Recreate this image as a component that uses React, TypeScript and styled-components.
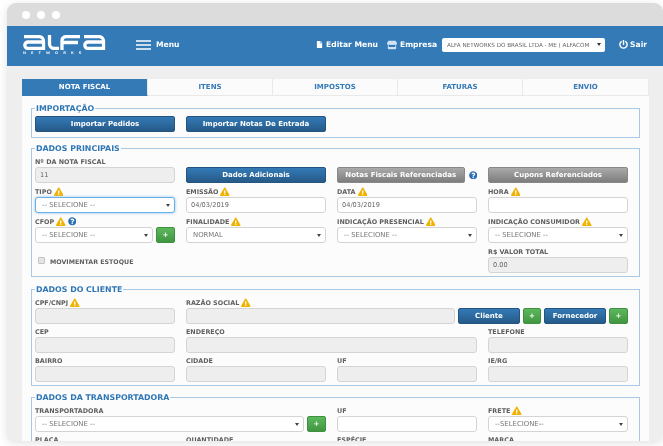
import React from 'react';
import styled, { createGlobalStyle } from 'styled-components';
import { FaExclamationTriangle, FaFile, FaPowerOff, FaQuestionCircle, FaStore } from 'react-icons/fa';

const GlobalStyle = createGlobalStyle`
  html, body {
    margin: 0;
    height: 100%;
    overflow: hidden;
    background: #fff;
    font-family: "DejaVu Sans", Verdana, sans-serif;
  }
`;

const Frame = styled.div`
  width: 656px;
  height: 438px;
  margin: 3px 0 0 7px;
  border-radius: 9px 9px 7px 7px;
  overflow: hidden;
  background: #eeeeee;
  box-shadow: 0 2px 10px rgba(0, 0, 0, 0.12);
  filter: blur(0.3px);
`;

const TitleBar = styled.div`
  height: 23px;
  background: #dcdcdc;
  display: flex;
  align-items: center;
  gap: 7px;
  padding-left: 15px;
`;

const Dot = styled.span`
  width: 8px;
  height: 8px;
  border-radius: 50%;
  background: #fff;
`;

const Header = styled.header`
  height: 40px;
  box-sizing: border-box;
  background: #337ab7;
  display: flex;
  align-items: center;
  color: #fff;
  font-size: 7.6px;
  font-weight: bold;
  padding: 0 0 3px 15px;
`;

const Logo = styled.div`
  width: 84px;
  display: flex;
  flex-direction: column;
  align-items: flex-start;
  gap: 1px;
  margin: 1px 30px 0 0;
`;

const LogoSub = styled.span`
  font-size: 3.6px;
  letter-spacing: 5.05px;
  line-height: 5px;
  margin-left: 1px;
  opacity: 0.9;
`;

const HeaderItem = styled.span<{ $left?: number }>`
  display: inline-flex;
  align-items: center;
  gap: 3px;
  margin-left: ${({ $left }) => $left ?? 0}px;
  white-space: nowrap;
`;

const MenuItem = styled(HeaderItem)`
  gap: 5px;
`;

const LogoutItem = styled(HeaderItem)`
  gap: 2px;
  margin-right: 16px;
`;

const Spacer = styled.div`
  flex: 1;
`;

const CompanySelect = styled.div`
  width: 163px;
  height: 14px;
  margin: 0 14px 0 5px;
  box-sizing: border-box;
  background: #fff;
  border-radius: 2px;
  color: #666;
  font-size: 5.65px;
  font-weight: normal;
  display: flex;
  align-items: center;
  justify-content: space-between;
  padding: 0 4px 0 5px;
  white-space: nowrap;
  overflow: hidden;
`;

const Caret = styled.i`
  flex: none;
  width: 0;
  height: 0;
  border: 2px solid transparent;
  border-top: 3px solid #333;
  border-bottom: 0;
`;

const Content = styled.div`
  padding: 13px 14px 0 15px;
`;

const Tabs = styled.nav`
  display: grid;
  grid-template-columns: 126px 125px 125px 125px 126px;
  height: 17px;
`;

const Tab = styled.div<{ $active?: boolean }>`
  background: ${({ $active }) => ($active ? '#337ab7' : '#fbfbfb')};
  color: ${({ $active }) => ($active ? '#fff' : '#337ab7')};
  border-right: 1px solid #e9e9e9;
  border-bottom: 1px solid ${({ $active }) => ($active ? '#337ab7' : '#e9e9e9')};
  box-sizing: border-box;
  font-size: 7px;
  font-weight: bold;
  display: flex;
  align-items: center;
  justify-content: center;
`;

const Panel = styled.main`
  background: #fcfcfc;
  padding: 6px 9px 0;
  height: 400px;
`;

const Group = styled.fieldset<{ $after: number }>`
  margin: 0 0 ${({ $after }) => $after}px;
  padding: 1px 11px 3px 3px;
  border: 1px solid #a9c8e4;
  min-width: 0;
`;

const GroupTitle = styled.legend`
  margin-left: 0;
  padding: 0 1px;
  height: 13px;
  line-height: 13px;
  color: #2f76b5;
  font-size: 7.85px;
  font-weight: bold;
`;

const Grid = styled.div<{ $gap: number }>`
  display: grid;
  grid-template-columns: repeat(4, 140px);
  column-gap: 11px;
  row-gap: ${({ $gap }) => $gap}px;
  align-items: end;
`;

const Cell = styled.div<{ $span?: number }>`
  grid-column: span ${({ $span }) => $span ?? 1};
  min-width: 0;
`;

const Label = styled.label`
  display: flex;
  align-items: center;
  gap: 2px;
  height: 11px;
  color: #5f5f5f;
  font-size: 6.4px;
  font-weight: bold;
  white-space: nowrap;
`;

const Warn = styled(FaExclamationTriangle)`
  color: #f0b400;
  font-size: 9.5px;
`;

const Help = styled(FaQuestionCircle)`
  color: #2a6fb0;
  font-size: 8.5px;
  flex: none;
`;

const TextBox = styled.input`
  display: block;
  width: 100%;
  height: 16px;
  box-sizing: border-box;
  padding: 0 4px;
  border: 1px solid #d4d4d4;
  border-radius: 3px;
  color: #666;
  background: #fff;
  font-family: inherit;
  font-size: 6.6px;
  outline: none;
  &:read-only {
    background: #eeeeee;
  }
`;

const SelectWrap = styled.div`
  position: relative;
  flex: 1;
  min-width: 0;
  &::after {
    content: '';
    position: absolute;
    right: 5px;
    top: 7px;
    border: 2px solid transparent;
    border-top: 3px solid #444;
    border-bottom: 0;
  }
`;

const SelectBox = styled.select<{ $focus?: boolean }>`
  display: block;
  width: 100%;
  height: 16px;
  box-sizing: border-box;
  padding: 0 6px;
  appearance: none;
  border: 1px solid ${({ $focus }) => ($focus ? '#66afe9' : '#d4d4d4')};
  box-shadow: ${({ $focus }) => ($focus ? '0 0 3px rgba(102, 175, 233, 0.8)' : 'none')};
  border-radius: 3px;
  background: #fff;
  color: #777;
  font-family: inherit;
  font-size: 6.9px;
  outline: none;
`;

const Row = styled.div`
  display: flex;
  align-items: center;
  gap: 3px;
`;

const Btn = styled.button<{ $tone?: 'blue' | 'grey' | 'green'; $w?: number }>`
  width: ${({ $w }) => ($w ? `${$w}px` : '100%')};
  flex: ${({ $w }) => ($w ? 'none' : '1')};
  height: 16px;
  padding: 0;
  border-radius: 2px;
  border: 1px solid
    ${({ $tone }) => ($tone === 'grey' ? '#888' : $tone === 'green' ? '#3e8f3e' : '#245580')};
  background: ${({ $tone }) =>
    $tone === 'grey'
      ? 'linear-gradient(#aaa, #7d7d7d)'
      : $tone === 'green'
        ? 'linear-gradient(#5cb85c, #419641)'
        : 'linear-gradient(#337ab7, #265a88)'};
  color: #fff;
  font-family: inherit;
  font-size: 7px;
  font-weight: bold;
  white-space: nowrap;
`;

const ImportRow = styled.div`
  display: flex;
  gap: 11px;
  padding-bottom: 2px;
`;

const ImportBtn = styled(Btn)`
  width: 140px;
  flex: none;
`;

const HelpRow = styled(Row)`
  gap: 4px;
`;

const StockRow = styled.div`
  display: flex;
  align-items: center;
  gap: 5px;
  padding: 0 0 8px 3px;
  color: #5f5f5f;
  font-size: 6.3px;
  font-weight: bold;
`;

const Check = styled.span`
  width: 5px;
  height: 5px;
  margin-top: -3px;
  background: #e4e4e4;
  border: 1px solid #c4c4c4;
  border-radius: 1px;
`;

type FieldProps = {
  label: string;
  warn?: boolean;
  help?: boolean;
  span?: number;
  children: React.ReactNode;
};

function Field({ label, warn, help, span, children }: FieldProps) {
  return (
    <Cell $span={span}>
      <Label>
        {label}
        {warn && <Warn />}
        {help && <Help />}
      </Label>
      {children}
    </Cell>
  );
}

function Select({ value, focus }: { value: string; focus?: boolean }) {
  return (
    <SelectWrap>
      <SelectBox $focus={focus} defaultValue={value}>
        <option>{value}</option>
      </SelectBox>
    </SelectWrap>
  );
}

const AlfaLogo = () => (
  <svg width="84" height="15" viewBox="0 0 84 15" fill="none" stroke="#fff" strokeWidth="3.3">
    <path d="M2 1.6h15a4.5 4.5 0 0 1 4.5 4.5v7.3H6a3.2 3.2 0 0 1 0-6.4h15.5" />
    <path d="M27.5 0v9a4.5 4.5 0 0 0 4.5 4.4h5" />
    <path d="M58 1.6H44a4 4 0 0 0-4 4V15M40 7.5h16" />
    <path d="M62 1.6h15a4.5 4.5 0 0 1 4.5 4.5v7.3H66a3.2 3.2 0 0 1 0-6.4h15.5" />
  </svg>
);

const Burger = () => (
  <svg width="15" height="10" viewBox="0 0 15 10" stroke="#fff" strokeWidth="1.5">
    <path d="M0 1h15M0 5h15M0 9h15" />
  </svg>
);

const tabs = ['NOTA FISCAL', 'ITENS', 'IMPOSTOS', 'FATURAS', 'ENVIO'];
const NONE = '-- SELECIONE --';

export default function App() {
  return (
    <>
      <GlobalStyle />
      <Frame>
        <TitleBar>
          <Dot />
          <Dot />
          <Dot />
        </TitleBar>
        <Header>
          <Logo>
            <AlfaLogo />
            <LogoSub>NETWORKS</LogoSub>
          </Logo>
          <MenuItem>
            <Burger />
            Menu
          </MenuItem>
          <Spacer />
          <HeaderItem>
            <FaFile size={7} />
            Editar Menu
          </HeaderItem>
          <HeaderItem $left={9}>
            <FaStore size={10} color="#cfe2f3" />
            Empresa
          </HeaderItem>
          <CompanySelect>
            ALFA NETWORKS DO BRASIL LTDA - ME ( ALFACOM
            <Caret />
          </CompanySelect>
          <LogoutItem>
            <FaPowerOff size={9} />
            Sair
          </LogoutItem>
        </Header>
        <Content>
          <Tabs>
            {tabs.map((t, i) => (
              <Tab key={t} $active={i === 0}>
                {t}
              </Tab>
            ))}
          </Tabs>
          <Panel>
            <Group $after={4}>
              <GroupTitle>IMPORTAÇÃO</GroupTitle>
              <ImportRow>
                <ImportBtn>Importar Pedidos</ImportBtn>
                <ImportBtn>Importar Notas De Entrada</ImportBtn>
              </ImportRow>
            </Group>

            <Group $after={6}>
              <GroupTitle>DADOS PRINCIPAIS</GroupTitle>
              <Grid $gap={3}>
                <Field label="Nº DA NOTA FISCAL">
                  <TextBox readOnly value="11" />
                </Field>
                <Cell>
                  <Btn>Dados Adicionais</Btn>
                </Cell>
                <Cell>
                  <HelpRow>
                    <Btn $tone="grey">Notas Fiscais Referenciadas</Btn>
                    <Help />
                  </HelpRow>
                </Cell>
                <Cell>
                  <Btn $tone="grey">Cupons Referenciados</Btn>
                </Cell>

                <Field label="TIPO" warn>
                  <Select value={NONE} focus />
                </Field>
                <Field label="EMISSÃO" warn>
                  <TextBox value="04/03/2019" onChange={() => {}} />
                </Field>
                <Field label="DATA" warn>
                  <TextBox value="04/03/2019" onChange={() => {}} />
                </Field>
                <Field label="HORA" warn>
                  <TextBox value="" onChange={() => {}} />
                </Field>

                <Field label="CFOP" warn help>
                  <Row>
                    <Select value={NONE} />
                    <Btn $tone="green" $w={19}>+</Btn>
                  </Row>
                </Field>
                <Field label="FINALIDADE" warn>
                  <Select value="NORMAL" />
                </Field>
                <Field label="INDICAÇÃO PRESENCIAL" warn>
                  <Select value={NONE} />
                </Field>
                <Field label="INDICAÇÃO CONSUMIDOR" warn>
                  <Select value={NONE} />
                </Field>

                <Cell $span={3}>
                  <StockRow>
                    <Check />
                    MOVIMENTAR ESTOQUE
                  </StockRow>
                </Cell>
                <Field label="R$ VALOR TOTAL">
                  <TextBox readOnly value="0.00" />
                </Field>
              </Grid>
            </Group>

            <Group $after={5}>
              <GroupTitle>DADOS DO CLIENTE</GroupTitle>
              <Grid $gap={2}>
                <Field label="CPF/CNPJ" warn>
                  <TextBox readOnly />
                </Field>
                <Field label="RAZÃO SOCIAL" warn span={3}>
                  <Row>
                    <TextBox readOnly />
                    <Btn $w={62}>Cliente</Btn>
                    <Btn $tone="green" $w={18}>+</Btn>
                    <Btn $w={62}>Fornecedor</Btn>
                    <Btn $tone="green" $w={19}>+</Btn>
                  </Row>
                </Field>

                <Field label="CEP">
                  <TextBox readOnly />
                </Field>
                <Field label="ENDEREÇO" span={2}>
                  <TextBox readOnly />
                </Field>
                <Field label="TELEFONE">
                  <TextBox readOnly />
                </Field>

                <Field label="BAIRRO">
                  <TextBox readOnly />
                </Field>
                <Field label="CIDADE">
                  <TextBox readOnly />
                </Field>
                <Field label="UF">
                  <TextBox readOnly />
                </Field>
                <Field label="IE/RG">
                  <TextBox readOnly />
                </Field>
              </Grid>
            </Group>

            <Group $after={5}>
              <GroupTitle>DADOS DA TRANSPORTADORA</GroupTitle>
              <Grid $gap={2}>
                <Field label="TRANSPORTADORA" span={2}>
                  <Row>
                    <Select value={NONE} />
                    <Btn $tone="green" $w={19}>+</Btn>
                  </Row>
                </Field>
                <Field label="UF">
                  <TextBox value="" onChange={() => {}} />
                </Field>
                <Field label="FRETE" warn>
                  <Select value="--SELECIONE--" />
                </Field>

                <Field label="PLACA">
                  <TextBox value="" onChange={() => {}} />
                </Field>
                <Field label="QUANTIDADE">
                  <TextBox value="" onChange={() => {}} />
                </Field>
                <Field label="ESPÉCIE">
                  <TextBox value="" onChange={() => {}} />
                </Field>
                <Field label="MARCA">
                  <TextBox value="" onChange={() => {}} />
                </Field>
              </Grid>
            </Group>
          </Panel>
        </Content>
      </Frame>
    </>
  );
}
